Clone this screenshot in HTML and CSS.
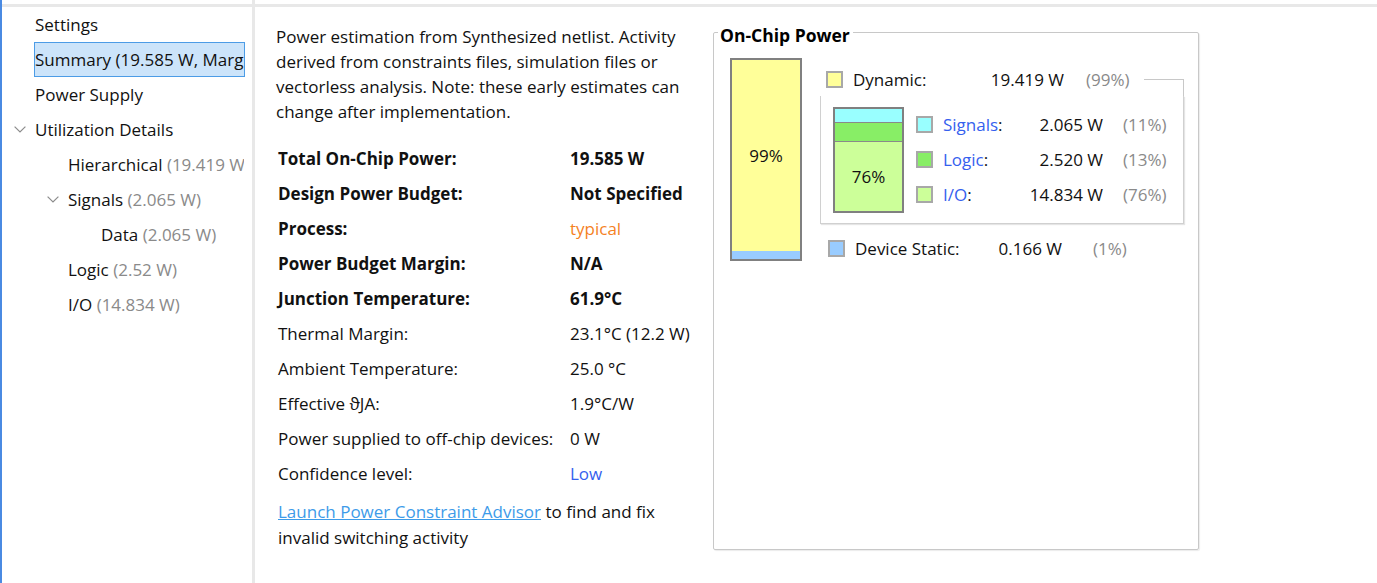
FILE: index.html
```html
<!DOCTYPE html>
<html lang="en">
<head>
<meta charset="utf-8">
<title>Power Summary</title>
<link rel="stylesheet" href="styles.css">
</head>
<body>
<div class="app">
  <aside class="sidebar">
    <div class="tree">
      <div class="row l0"><span class="tog"></span><span class="lbl">Settings</span></div>
      <div class="row l0"><span class="tog"></span><span class="lbl sel">Summary (19.585 W, Margin: N/A)</span></div>
      <div class="row l0"><span class="tog"></span><span class="lbl">Power Supply</span></div>
      <div class="row l0"><span class="tog"><svg class="chev" width="12" height="7" viewBox="0 0 12 7"><path d="M0.6 0.6 L6 6 L11.4 0.6" /></svg></span><span class="lbl">Utilization Details</span></div>
      <div class="row l1"><span class="tog"></span><span class="lbl">Hierarchical <span class="dim">(19.419 W)</span></span></div>
      <div class="row l1"><span class="tog"><svg class="chev" width="12" height="7" viewBox="0 0 12 7"><path d="M0.6 0.6 L6 6 L11.4 0.6" /></svg></span><span class="lbl">Signals <span class="dim">(2.065 W)</span></span></div>
      <div class="row l2"><span class="tog"></span><span class="lbl">Data <span class="dim">(2.065 W)</span></span></div>
      <div class="row l1"><span class="tog"></span><span class="lbl">Logic <span class="dim">(2.52 W)</span></span></div>
      <div class="row l1"><span class="tog"></span><span class="lbl">I/O <span class="dim">(14.834 W)</span></span></div>
    </div>
  </aside>
  <div class="divider"></div>
  <main class="main">
    <div class="main-inner">
      <section class="info">
        <p class="desc">Power estimation from Synthesized netlist. Activity derived from constraints files, simulation files or vectorless analysis. Note: these early estimates can change after implementation.</p>
        <table class="props">
          <tr class="b"><td class="k">Total On-Chip Power:</td><td>19.585 W</td></tr>
          <tr class="b"><td class="k">Design Power Budget:</td><td>Not Specified</td></tr>
          <tr class="b"><td class="k">Process:</td><td class="orange">typical</td></tr>
          <tr class="b"><td class="k">Power Budget Margin:</td><td>N/A</td></tr>
          <tr class="b"><td class="k">Junction Temperature:</td><td>61.9°C</td></tr>
          <tr><td class="k">Thermal Margin:</td><td>23.1°C (12.2 W)</td></tr>
          <tr><td class="k">Ambient Temperature:</td><td>25.0 °C</td></tr>
          <tr><td class="k">Effective ϑJA:</td><td>1.9°C/W</td></tr>
          <tr><td class="k">Power supplied to off-chip devices:</td><td>0 W</td></tr>
          <tr><td class="k">Confidence level:</td><td class="blue">Low</td></tr>
        </table>
        <p class="advisor"><a href="#">Launch Power Constraint Advisor</a> to find and fix invalid switching activity</p>
      </section>
      <fieldset class="panel">
        <legend>On-Chip Power</legend>
        <div class="chart">
          <div class="bigbar">
            <div class="seg-dyn">99%</div>
            <div class="seg-static"></div>
          </div>
          <div class="legendcol">
            <div class="dynrow">
              <span class="sw c-yellow"></span>
              <span class="name">Dynamic:</span>
              <span class="val">19.419 W</span>
              <span class="pct">(99%)</span>
              <span class="conn"></span>
            </div>
            <div class="subbox">
              <div class="smallbar">
                <div class="s-sig"></div>
                <div class="s-log"></div>
                <div class="s-io">76%</div>
              </div>
              <div class="sublegend">
                <div class="srow"><span class="sw c-cyan"></span><span class="name"><span class="blue">Signals</span>:</span><span class="val">2.065 W</span><span class="pct">(11%)</span></div>
                <div class="srow"><span class="sw c-green"></span><span class="name"><span class="blue">Logic</span>:</span><span class="val">2.520 W</span><span class="pct">(13%)</span></div>
                <div class="srow"><span class="sw c-lgreen"></span><span class="name"><span class="blue">I/O</span>:</span><span class="val">14.834 W</span><span class="pct">(76%)</span></div>
              </div>
            </div>
            <div class="staticrow">
              <span class="sw c-lblue"></span>
              <span class="name">Device Static:</span>
              <span class="val">0.166 W</span>
              <span class="pct">(1%)</span>
            </div>
          </div>
        </div>
      </fieldset>
    </div>
  </main>
</div>
</body>
</html>
```

FILE: styles.css
```css
html, body {
  margin: 0;
  padding: 0;
  background: #ffffff;
}

body {
  font-family: "Open Sans", "Noto Sans", "DejaVu Sans", sans-serif;
  font-size: 17px;
  color: #111111;
}

.app {
  display: flex;
  height: 583px;
  border-left: 2px solid #4a8ae2;
  overflow: hidden;
}

/* ---------- sidebar tree ---------- */
.sidebar {
  width: 250px;
  flex: none;
  padding-top: 4px;
}

.tree {
  border-top: 3px solid #e8e8e8;
  padding-right: 7px;
}

.row {
  display: flex;
  align-items: center;
  height: 35px;
  padding-left: 4px;
}

.row.l1 { padding-left: 37px; }
.row.l2 { padding-left: 70px; }

.tog {
  width: 28px;
  flex: none;
  display: flex;
  align-items: center;
  justify-content: center;
  height: 35px;
}

.chev path {
  fill: none;
  stroke: #8c8c8c;
  stroke-width: 1.2;
}

.lbl {
  flex: 1;
  min-width: 0;
  height: 35px;
  line-height: 34px;
  box-sizing: border-box;
  border: 1px solid transparent;
  padding-left: 0;
  white-space: nowrap;
  overflow: hidden;
}

.lbl.sel {
  background: #cce4fa;
  border-color: #4c9ce6;
}

.dim { color: #8a8a8a; }

.divider {
  width: 3px;
  flex: none;
  background: #e8e8e8;
}

/* ---------- main ---------- */
.main {
  flex: 1;
  padding-top: 4px;
}

.main-inner {
  border-top: 3px solid #e8e8e8;
  padding: 15px 0 0 21px;
  display: flex;
  align-items: flex-start;
}

.info {
  width: 437px;
  flex: none;
  padding-top: 2px;
}

.desc {
  margin: 0;
  width: 420px;
  line-height: 25px;
}

.props {
  margin: 17px 0 0 2px;
  border-collapse: collapse;
}

.props td {
  padding: 0;
  height: 35px;
  white-space: nowrap;
}

.props td.k { width: 292px; }

.props tr.b td { font-weight: 700; }
.props tr.b td.orange { font-weight: 400; }

.orange { color: #f5821f; }
.blue { color: #3560ee; }

.advisor {
  margin: 8px 0 0 2px;
  width: 415px;
  line-height: 26px;
}

.advisor a {
  color: #3d9be9;
  text-decoration: underline;
}

/* ---------- On-Chip Power panel ---------- */
.panel {
  margin: 0;
  padding: 0;
  width: 486px;
  height: 528px;
  box-sizing: border-box;
  border: 1px solid #c8c8c8;
  border-radius: 2px;
  box-shadow: 1px 1px 1px rgba(0, 0, 0, 0.08);
  min-width: 0;
}

.panel legend {
  font-size: 17.5px;
  font-weight: 700;
  line-height: 16px;
  padding: 5px 3px 0 2px;
  margin-left: 4px;
  color: #000;
}

.chart {
  display: flex;
  align-items: flex-start;
  padding-left: 16px;
}

.bigbar {
  width: 72px;
  height: 203px;
  margin-top: 15px;
  box-sizing: border-box;
  border: 2px solid #808080;
  display: flex;
  flex-direction: column;
  flex: none;
}

.seg-dyn {
  flex: 1;
  background: #ffff99;
  display: flex;
  align-items: center;
  justify-content: center;
}

.seg-static {
  height: 8px;
  background: #99ccff;
}

.legendcol {
  width: 364px;
  margin: 19px 0 0 18px;
  flex: none;
}

.sw {
  width: 17px;
  height: 17px;
  box-sizing: border-box;
  border: 2px solid #a8a8a8;
  flex: none;
}

.c-yellow { background: #ffff99; }
.c-cyan { background: #99ffff; }
.c-green { background: #88ee66; }
.c-lgreen { background: #ccff99; }
.c-lblue { background: #99ccff; }

.pct { color: #8a8a8a; white-space: nowrap; }
.val { text-align: right; white-space: nowrap; }
.name { white-space: nowrap; }

.dynrow {
  display: flex;
  align-items: center;
  height: 34px;
}

.dynrow .sw { margin-left: 6px; }
.dynrow .name { margin-left: 10px; width: 117px; }
.dynrow .val { width: 94px; }
.dynrow .pct { margin-left: 22px; }

.conn {
  flex: 1;
  align-self: stretch;
  margin: 17px 0 0 14px;
  border-top: 1px solid #c8c8c8;
  border-right: 1px solid #c8c8c8;
}

.subbox {
  display: flex;
  align-items: flex-start;
  border: 1px solid #d0d0d0;
  border-top: none;
  padding: 11px 0 10px 12px;
  box-shadow: 1px 1px 1px rgba(0, 0, 0, 0.1);
}

.smallbar {
  width: 71px;
  height: 106px;
  box-sizing: border-box;
  border: 2px solid #808080;
  display: flex;
  flex-direction: column;
  flex: none;
}

.s-sig {
  height: 14px;
  box-sizing: border-box;
  background: #99ffff;
  border-bottom: 1px solid #8a8a8a;
}

.s-log {
  height: 19px;
  box-sizing: border-box;
  background: #88ee66;
  border-bottom: 1px solid #8a8a8a;
}

.s-io {
  flex: 1;
  background: #ccff99;
  display: flex;
  align-items: center;
  justify-content: center;
}

.sublegend {
  margin-left: 12px;
}

.srow {
  display: flex;
  align-items: center;
  height: 35px;
}

.srow .name { margin-left: 10px; width: 80px; }
.srow .val { width: 80px; }
.srow .pct { margin-left: 20px; }

.staticrow {
  display: flex;
  align-items: center;
  height: 34px;
  margin-top: 7px;
}

.staticrow .sw { margin-left: 8px; }
.staticrow .name { margin-left: 10px; width: 113px; }
.staticrow .val { width: 94px; }
.staticrow .pct { margin-left: 31px; }
```
